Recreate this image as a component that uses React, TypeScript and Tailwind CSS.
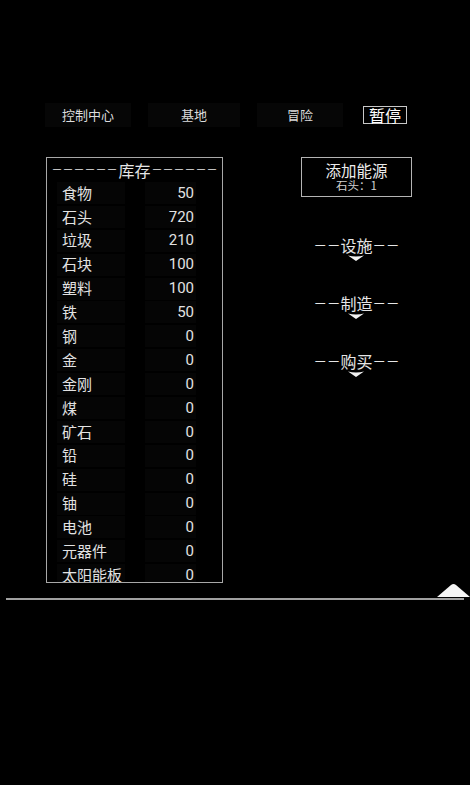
const FONT = "font-['Noto_Sans_CJK_SC','Noto_Sans',sans-serif]";

const items: [string, number][] = [
  ["食物", 50],
  ["石头", 720],
  ["垃圾", 210],
  ["石块", 100],
  ["塑料", 100],
  ["铁", 50],
  ["钢", 0],
  ["金", 0],
  ["金刚", 0],
  ["煤", 0],
  ["矿石", 0],
  ["铅", 0],
  ["硅", 0],
  ["铀", 0],
  ["电池", 0],
  ["元器件", 0],
  ["太阳能板", 0],
];

function Chevron() {
  return (
    <svg width="16" height="6" viewBox="0 0 16 6" className="block">
      <path d="M0 0.5 Q8 2.5 16 0.5 L8 6 Z" fill="#f2f2f2" />
    </svg>
  );
}

function Section({ title }: { title: string }) {
  return (
    <div className="flex flex-col items-center">
      <div className="flex h-[20px] items-center text-[#e6e6e6]">
        <span className="text-[13.5px] leading-none">－－</span>
        <span className="text-[16px] leading-none">{title}</span>
        <span className="text-[13.5px] leading-none">－－</span>
      </div>
      <Chevron />
    </div>
  );
}

export default function App() {
  return (
    <div className={`w-[470px] h-[785px] bg-black overflow-hidden ${FONT}`}>
      {/* top nav */}
      <div className="flex items-center pt-[103px] pl-[45px]">
        <div className="flex h-[24px] w-[86px] items-center justify-center bg-[#060606] text-[13px] text-[#dcdcdc]">
          控制中心
        </div>
        <div className="ml-[17px] flex h-[24px] w-[92px] items-center justify-center bg-[#060606] text-[13px] text-[#dcdcdc]">
          基地
        </div>
        <div className="ml-[17px] flex h-[24px] w-[86px] items-center justify-center bg-[#060606] text-[13px] text-[#dcdcdc]">
          冒险
        </div>
        <div className="ml-[20px] flex h-[18px] w-[44px] items-center justify-center border border-[#c8c8c8] text-[16px] leading-none text-white">
          暂停
        </div>
      </div>

      {/* main */}
      <div className="mt-[30px] flex items-start">
        <div className="ml-[46px] h-[426px] w-[177px] overflow-hidden border border-[#a8a8a8]">
          <div className="flex h-[23px] items-center justify-center text-[#e6e6e6]">
            <span className="text-[11px] leading-none">－－－－－－</span>
            <span className="px-[1px] text-[16px] leading-none">库存</span>
            <span className="text-[11px] leading-none">－－－－－－</span>
          </div>
          {items.map(([name, n]) => (
            <div key={name} className="flex h-[23.9px] items-center text-[15px] text-[#e2e2e2]">
              <div className="ml-[10px] flex h-[22px] w-[68px] items-center bg-[#050505] pl-[5px]">
                {name}
              </div>
              <div className="ml-[20px] flex h-[22px] w-[51px] items-center justify-end bg-[#050505] pr-[2px] font-['Roboto',sans-serif]">
                {n}
              </div>
            </div>
          ))}
        </div>

        <div className="ml-[78px] flex w-[111px] flex-col items-center">
          <div className="flex h-[40px] w-[111px] flex-col items-center justify-center gap-[2px] border border-[#b4b4b4] bg-black">
            <div className="text-[15.5px] leading-none text-[#ececec]">添加能源</div>
            <div className="text-[11.5px] leading-none text-[#d0d0d0]">石头：1</div>
          </div>
          <div className="mt-[38px]">
            <Section title="设施" />
          </div>
          <div className="mt-[32px]">
            <Section title="制造" />
          </div>
          <div className="mt-[32px]">
            <Section title="购买" />
          </div>
        </div>
      </div>

      {/* bottom bar */}
      <div className="flex justify-end">
        <svg width="33" height="14" viewBox="0 0 33 14" className="block">
          <path d="M0 14 L14 2 Q16.5 0 19 2 L33 14 Z" fill="#f4f4f4" />
        </svg>
      </div>
      <div className="mx-[6px] mt-[1px] h-[1.5px] bg-[#a0a0a0]" />
    </div>
  );
}
